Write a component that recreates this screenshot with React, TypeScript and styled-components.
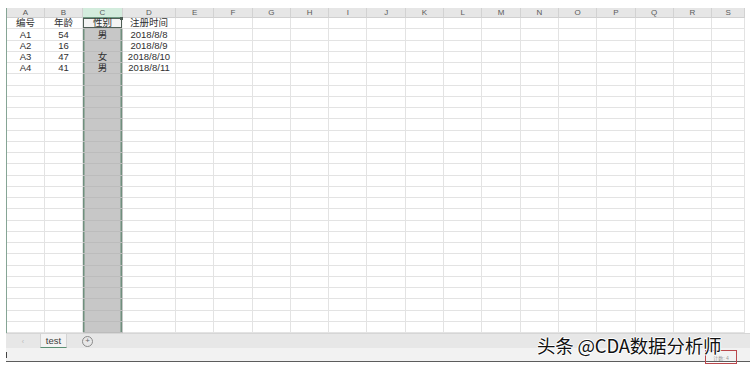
import styled, { createGlobalStyle } from 'styled-components'

const GlobalStyle = createGlobalStyle`
  html, body {
    margin: 0;
    padding: 0;
    background: #ffffff;
  }
`

const COLS = ['A', 'B', 'C', 'D', 'E', 'F', 'G', 'H', 'I', 'J', 'K', 'L', 'M', 'N', 'O', 'P', 'Q', 'R', 'S']
const SELECTED = 2
const ROW_COUNT = 28

const data: string[][] = [
  ['编号', '年龄', '性别', '注册时间'],
  ['A1', '54', '男', '2018/8/8'],
  ['A2', '16', '', '2018/8/9'],
  ['A3', '47', '女', '2018/8/10'],
  ['A4', '41', '男', '2018/8/11'],
]

const Page = styled.div`
  position: relative;
  width: 750px;
  height: 366px;
  overflow: hidden;
  background: #ffffff;
  padding-top: 8px;
  box-sizing: border-box;
  font-family: 'Liberation Sans', 'Noto Sans CJK SC', sans-serif;
`

const Sheet = styled.div`
  display: grid;
  grid-template-columns: 38px 38px 40px 53px repeat(14, 38.3px) 1fr;
  grid-template-rows: 10px repeat(${ROW_COUNT}, 11.25px);
  width: 739px;
  margin-left: 6px;
  border-left: 1px solid #86a595;
  box-sizing: border-box;
  overflow: hidden;
`

const HeadCell = styled.div<{ $selected?: boolean }>`
  display: flex;
  align-items: center;
  justify-content: center;
  background: ${({ $selected }) => ($selected ? '#d3ecdd' : '#e6e6e6')};
  border-right: 1px solid #d2d2d2;
  border-bottom: 1px solid ${({ $selected }) => ($selected ? '#6f9a82' : '#d0d0d0')};
  color: #5a5a5a;
  font-size: 8px;
  line-height: 1;
  box-sizing: border-box;
`

const Cell = styled.div<{ $selected?: boolean; $active?: boolean }>`
  display: flex;
  align-items: center;
  justify-content: center;
  background: ${({ $selected, $active }) => ($active ? '#f4f4f4' : $selected ? '#c7c7c7' : '#ffffff')};
  border-right: 1px solid ${({ $selected }) => ($selected ? 'transparent' : '#e3e3e3')};
  border-bottom: 1px solid ${({ $selected }) => ($selected ? '#bcbcbc' : '#e3e3e3')};
  box-shadow: ${({ $selected, $active }) =>
    $active
      ? 'inset 0 0 0 1px #4f5f56'
      : $selected
        ? 'inset 1.5px 0 0 #6f8f7d, inset -1.5px 0 0 #6f8f7d'
        : 'none'};
  color: #2f2f2f;
  font-size: 9.5px;
  line-height: 1;
  white-space: nowrap;
  box-sizing: border-box;
  position: relative;
`

const FillHandle = styled.span`
  position: absolute;
  right: -1px;
  top: -1px;
  width: 3px;
  height: 3px;
  background: #4f5f56;
`

const TabBar = styled.div`
  display: flex;
  align-items: stretch;
  height: 15px;
  margin-left: 6px;
  background: #e7e7e7;
  border-top: 1px solid #d6d6d6;
  box-sizing: border-box;
`

const NavArea = styled.div`
  width: 34px;
  display: flex;
  align-items: center;
  justify-content: center;
  color: #b9b9b9;
  font-size: 7px;
`

const Tab = styled.div`
  width: 27px;
  display: flex;
  align-items: center;
  justify-content: center;
  background: #f3f3f3;
  border-bottom: 1.5px solid #5b8f73;
  border-left: 1px solid #d4d4d4;
  border-right: 1px solid #d4d4d4;
  color: #3d3d3d;
  font-size: 9.5px;
  box-sizing: border-box;
`

const AddButton = styled.div`
  margin-left: 15px;
  align-self: center;
  width: 9px;
  height: 9px;
  border: 1px solid #8a8a8a;
  border-radius: 50%;
  display: flex;
  align-items: center;
  justify-content: center;
  color: #6a6a6a;
  font-size: 8px;
  line-height: 1;
`

const StatusBar = styled.div`
  height: 14px;
  margin-left: 6px;
  background: #f2f2f2;
  border-bottom: 1.5px solid #5c5c5c;
  box-sizing: border-box;
  display: flex;
  align-items: center;
`

const StatusMark = styled.span`
  width: 1px;
  height: 6px;
  background: #444;
`

const CountBox = styled.div`
  position: absolute;
  left: 705px;
  top: 350px;
  width: 32px;
  height: 14px;
  border: 1px solid #b9474c;
  box-sizing: border-box;
  display: flex;
  align-items: flex-end;
  justify-content: center;
  padding-bottom: 2px;
  color: #9a9a9a;
  font-size: 5px;
`

const Watermark = styled.div`
  position: absolute;
  left: 537px;
  top: 334px;
  font-family: 'Noto Sans CJK SC', 'Noto Sans', sans-serif;
  font-size: 18.5px;
  line-height: 1.2;
  color: #111111;
  letter-spacing: -0.2px;
  text-shadow:
    1px 0 0 #fff,
    -1px 0 0 #fff,
    0 1px 0 #fff,
    0 -1px 0 #fff;
  white-space: nowrap;
`

export default function App() {
  return (
    <>
      <GlobalStyle />
      <Page>
        <Sheet>
          {COLS.map((c, i) => (
            <HeadCell key={c} $selected={i === SELECTED}>
              {c}
            </HeadCell>
          ))}
          {Array.from({ length: ROW_COUNT }).map((_, r) =>
            COLS.map((c, i) => {
              const active = r === 0 && i === SELECTED
              return (
                <Cell key={`${r}-${c}`} $selected={i === SELECTED} $active={active}>
                  {data[r]?.[i] ?? ''}
                  {active && <FillHandle />}
                </Cell>
              )
            })
          )}
        </Sheet>
        <TabBar>
          <NavArea>‹</NavArea>
          <Tab>test</Tab>
          <AddButton>+</AddButton>
        </TabBar>
        <StatusBar>
          <StatusMark />
        </StatusBar>
        <CountBox>计数: 4</CountBox>
        <Watermark>头条 @CDA数据分析师</Watermark>
      </Page>
    </>
  )
}
